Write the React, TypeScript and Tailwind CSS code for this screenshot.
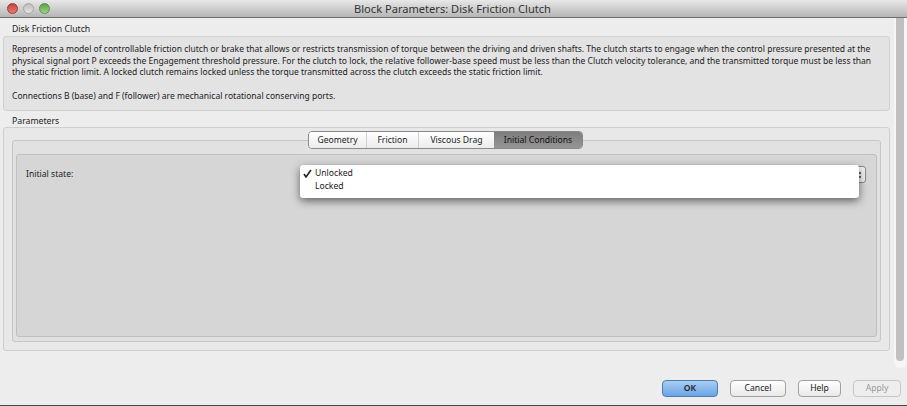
const tabBase = "flex items-center justify-center";
export default function App() {
  return (
    <div style={{ fontFamily: '"Noto Sans", sans-serif' }} className="relative w-[907px] h-[406px] overflow-hidden bg-[#ededed] text-[#222] flex flex-col">
      {/* title bar */}
      <div className="relative h-[18px] shrink-0 flex items-center justify-center bg-gradient-to-b from-[#e8e8e8] to-[#b6b6b6] border-b border-[#6e6e6e]">
        <div className="absolute left-[7px] top-[3px] flex gap-[5px]">
          <span className="w-[11px] h-[11px] rounded-full bg-gradient-to-b from-[#b84a45] to-[#f0776c] border border-[#a33]"></span>
          <span className="w-[11px] h-[11px] rounded-full bg-gradient-to-b from-[#bdbdbd] to-[#e3e3e3] border border-[#a5a5a5]"></span>
          <span className="w-[11px] h-[11px] rounded-full bg-gradient-to-b from-[#5c9e4e] to-[#9bd77f] border border-[#5c9347]"></span>
        </div>
        <span className="text-[11.1px] leading-[14px] text-[#333] -ml-[2px]">Block Parameters: Disk Friction Clutch</span>
      </div>
      <div className="flex h-[350px] shrink-0">
        <div className="w-[894px] shrink-0 pl-[3px] pr-[4px] flex flex-col">
          <div className="pl-[9px] pt-[5px] h-[18px] text-[8.7px] leading-[12px]">Disk Friction Clutch</div>
          <div className="h-[75px] shrink-0 rounded-[3px] bg-[#e3e3e3] border border-[#d0d0d0] px-[8px] pt-[6px] text-[8.53px] leading-[11.7px]">
            <p className="whitespace-nowrap">Represents a model of controllable friction clutch or brake that allows or restricts transmission of torque between the driving and driven shafts. The clutch starts to engage when the control pressure presented at the</p>
            <p className="whitespace-nowrap">physical signal port P exceeds the Engagement threshold pressure. For the clutch to lock, the relative follower-base speed must be less than the Clutch velocity tolerance, and the transmitted torque must be less than</p>
            <p className="whitespace-nowrap">the static friction limit. A locked clutch remains locked unless the torque transmitted across the clutch exceeds the static friction limit.</p>
            <p className="whitespace-nowrap mt-[11.7px]">Connections B (base) and F (follower) are mechanical rotational conserving ports.</p>
          </div>
          <div className="pl-[9px] pt-[4px] h-[16px] text-[8.7px] leading-[12px]">Parameters</div>
          <div className="relative h-[224px] shrink-0 rounded-[3px] bg-[#e8e8e8] border border-[#cfcfcf] px-[8px] pt-[12px] pb-[8px] flex flex-col">
            <div className="relative flex-1 rounded-[3px] bg-[#e1e1e1] border border-[#c6c6c6] px-[3px] pt-[13px] pb-[4px] flex flex-col">
              <div className="absolute left-[295px] top-[-10px] flex h-[18px] text-[8.6px] rounded-[4px] border border-[#8a8a8a] overflow-hidden">
                <span className={`${tabBase} w-[58px] bg-gradient-to-b from-white to-[#ececec] border-r border-[#cfcfcf]`}>Geometry</span>
                <span className={`${tabBase} w-[52px] bg-gradient-to-b from-white to-[#ececec] border-r border-[#cfcfcf]`}>Friction</span>
                <span className={`${tabBase} w-[75px] bg-gradient-to-b from-white to-[#ececec]`}>Viscous Drag</span>
                <span className={`${tabBase} w-[88px] bg-gradient-to-b from-[#7e7e7e] to-[#959595] text-[#111]`}>Initial Conditions</span>
              </div>
              <div className="relative flex-1 rounded-[3px] bg-[#d6d6d6] border border-[#c0c0c0]">
                <span className="absolute left-[9px] top-[13px] text-[8.6px] leading-[12px]">Initial state:</span>
                <div className="absolute right-[10px] top-[11px] w-[20px] h-[17px] rounded-[3px] border border-[#8a8a8a] bg-[#f4f4f4] flex flex-col items-end justify-center gap-[2px] pr-[4px]">
                  <span className="w-[2px] h-[2px] bg-[#666]"></span>
                  <span className="w-[2px] h-[2px] bg-[#666]"></span>
                </div>
                <div className="absolute left-[283px] top-[10px] w-[559px] h-[33px] rounded-[3px] bg-white shadow-[0_3px_8px_rgba(0,0,0,0.55)] text-[8.6px] leading-[13px] pt-[2px] pl-[15px]">
                  <svg className="absolute left-[3px] top-[4px]" width="9" height="9" viewBox="0 0 9 9" fill="none" stroke="#222" strokeWidth="1.6"><path d="M1 5l2 3 5-7" /></svg>
                  <div>Unlocked</div>
                  <div>Locked</div>
                </div>
              </div>
            </div>
          </div>
        </div>
        <div className="w-[13px] pl-[2px] bg-[#f6f6f6] rounded-b-[6px]">
          <div className="w-[8px] h-[343px] rounded-b-[4px] bg-[#c0c0c0]"></div>
        </div>
      </div>
      <div className="flex-1 flex justify-end items-start pt-[12px] pr-[6px] text-[8.6px]">
        <button className="w-[56px] h-[17px] rounded-[4px] border border-[#4d7bb0] bg-gradient-to-b from-[#a9cdf2] to-[#6aa5e6] font-semibold">OK</button>
        <button className="ml-[12px] w-[56px] h-[17px] rounded-[4px] border border-[#a0a0a0] bg-gradient-to-b from-white to-[#e9e9e9]">Cancel</button>
        <button className="ml-[12px] w-[43px] h-[17px] rounded-[4px] border border-[#a0a0a0] bg-gradient-to-b from-white to-[#e9e9e9]">Help</button>
        <button className="ml-[12px] w-[48px] h-[17px] rounded-[4px] border border-[#c6c6c6] bg-[#eeeeee] text-[#999]">Apply</button>
      </div>
      <div className="absolute left-0 right-0 bottom-0 h-[1px] bg-[#444]"></div>
    </div>
  );
}
